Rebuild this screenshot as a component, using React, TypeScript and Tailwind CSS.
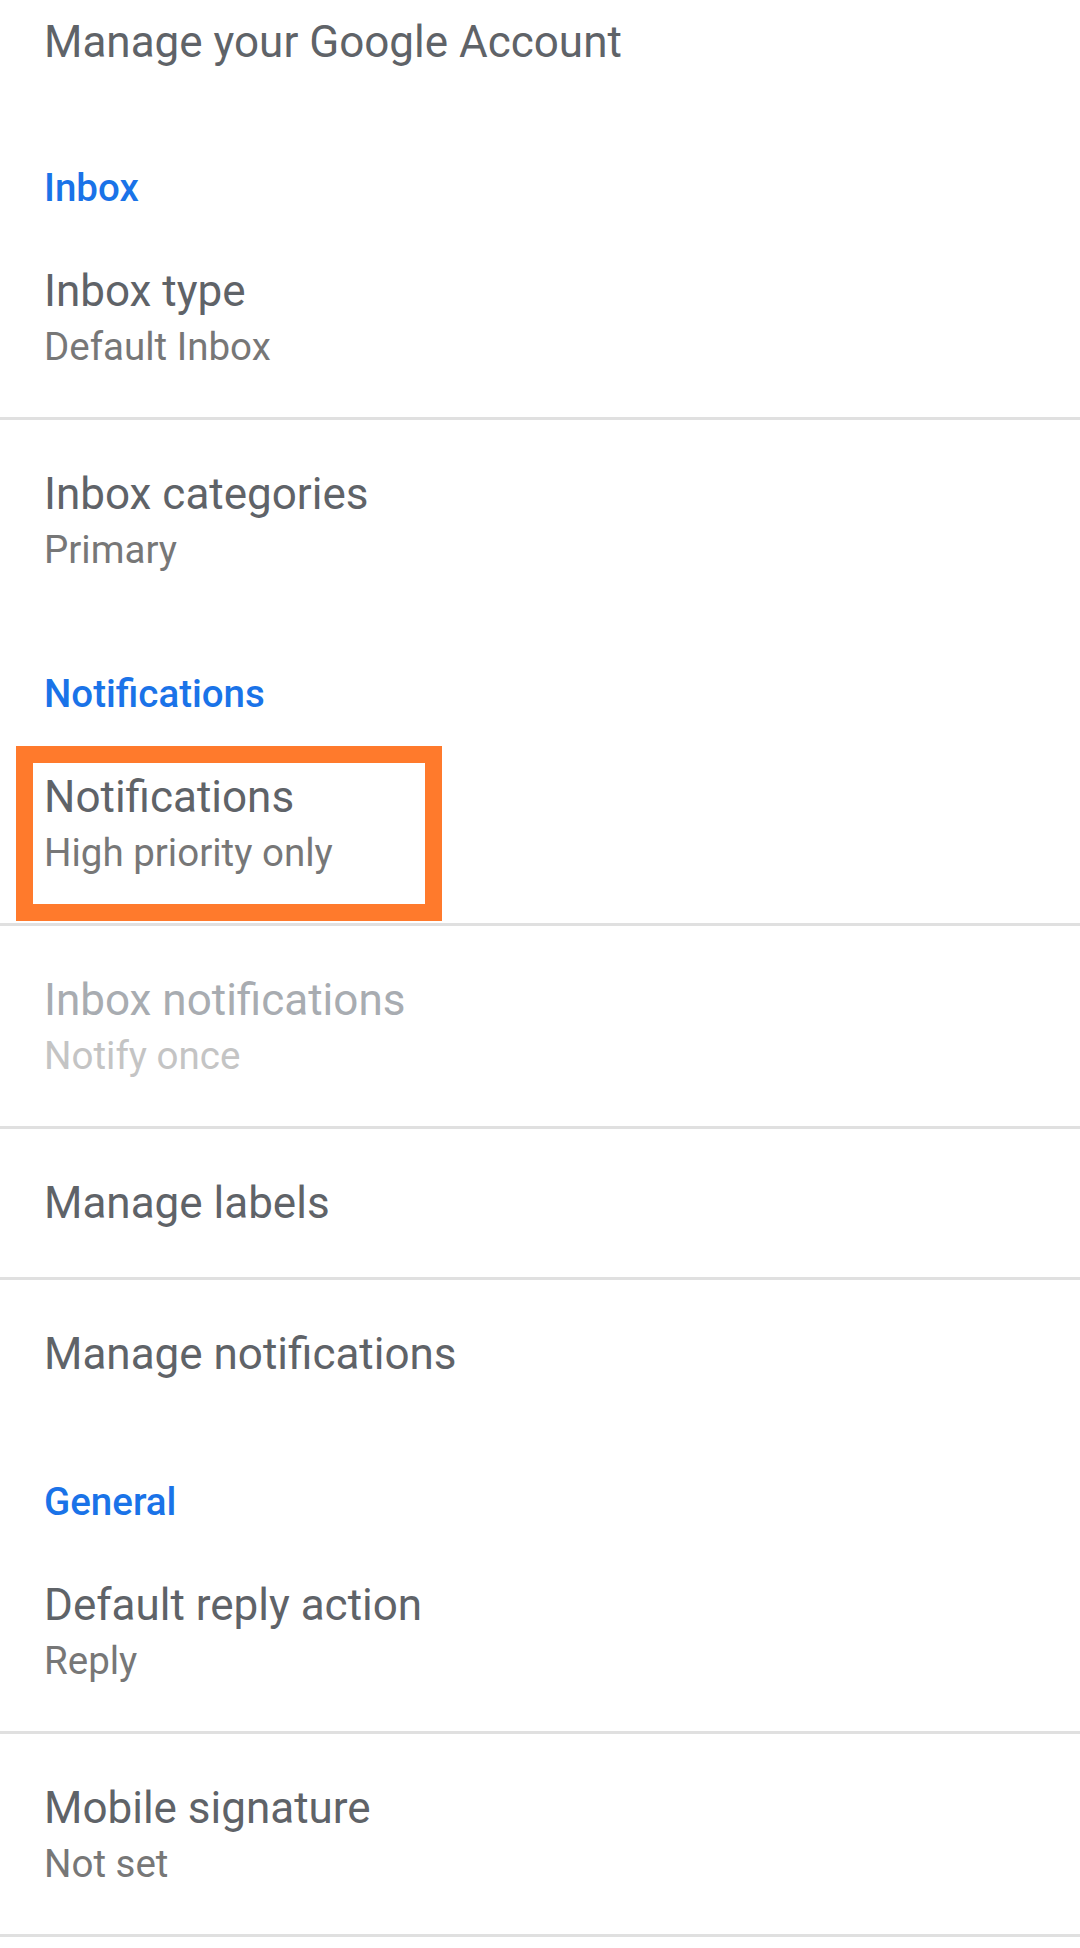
import React from "react";

const font = { fontFamily: "Roboto, 'Noto Sans', Arial, sans-serif" };

function Header({ text }: { text: string }) {
  return (
    <div className="pt-[48px] pl-[44px] text-[38.5px] leading-[52px] font-medium text-[#1a73e8]">
      {text}
    </div>
  );
}

function Row({
  title,
  summary,
  first,
  divider,
  disabled,
  highlight,
}: {
  title: string;
  summary?: string;
  first?: boolean;
  divider?: boolean;
  disabled?: boolean;
  highlight?: boolean;
}) {
  return (
    <div
      className={
        "relative pl-[44px] " +
        (first ? "pt-[47px] " : "pt-[44px] ") +
        (summary ? "pb-[44px] " : "pb-[44px] ") +
        (divider ? "border-b-[3px] border-[#e0e0e0]" : "")
      }
    >
      {highlight && (
        <div className="absolute left-[16px] top-[26px] w-[426px] h-[175px] border-[17px] border-[#ff7a2c] pointer-events-none" />
      )}
      <div
        className={
          "text-[44px] leading-[60px] " +
          (disabled ? "text-[#a8acb1]" : "text-[#5f6368]")
        }
      >
        {title}
      </div>
      {summary && (
        <div
          className={
            "text-[38.5px] leading-[52px] " +
            (disabled ? "text-[#c4c4c4]" : "text-[#777777]")
          }
        >
          {summary}
        </div>
      )}
    </div>
  );
}

export default function App() {
  return (
    <div className="w-[1080px] h-[1948px] bg-white overflow-hidden" style={font}>
      <div className="pt-[12px] pb-[42px] pl-[44px] text-[44px] leading-[60px] text-[#5f6368]">
        Manage your Google Account
      </div>

      <Header text="Inbox" />
      <Row first title="Inbox type" summary="Default Inbox" divider />
      <Row title="Inbox categories" summary="Primary" />

      <Header text="Notifications" />
      <Row first title="Notifications" summary="High priority only" divider highlight />
      <Row title="Inbox notifications" summary="Notify once" divider disabled />
      <Row title="Manage labels" divider />
      <Row title="Manage notifications" />

      <Header text="General" />
      <Row first title="Default reply action" summary="Reply" divider />
      <Row title="Mobile signature" summary="Not set" divider />
    </div>
  );
}
